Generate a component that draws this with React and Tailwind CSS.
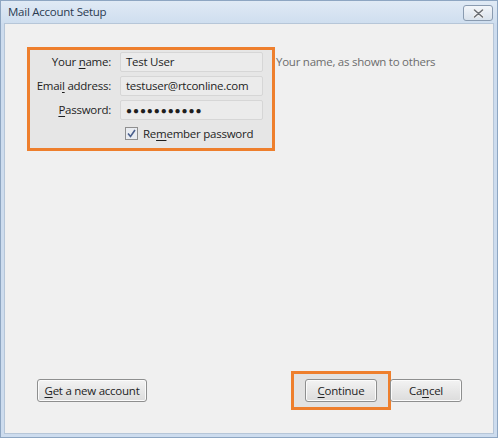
import React from "react";

const font = { fontFamily: '"Open Sans", "Noto Sans", sans-serif' };

function U({ children }) {
  return <span className="underline underline-offset-2 decoration-1">{children}</span>;
}

const txt = "text-[11.5px] tracking-[-0.25px] leading-none whitespace-nowrap";

function Field({ label, value, mono }) {
  return (
    <div className="flex items-center h-[20px]">
      <div className={"w-[81px] text-right text-[#1e1e1e] " + txt}>{label}</div>
      <div className={"ml-[9px] w-[143px] h-[20px] border border-[#d6d6d6] rounded-[2px] bg-[#ebebeb] flex items-center px-[5px] text-[#1e1e1e] " + txt}>
        {mono ? <span className="tracking-[0.9px] text-[10px]">{value}</span> : value}
      </div>
    </div>
  );
}

function Btn({ children, className = "" }) {
  return (
    <div
      className={
        "h-[23px] border border-[#8e8f8f] rounded-[3px] flex items-center justify-center text-[#1e1e1e] bg-gradient-to-b from-[#f3f3f3] to-[#dcdcdc] shadow-[inset_0_0_0_1px_#fbfbfb] " +
        txt +
        " " +
        className
      }
    >
      {children}
    </div>
  );
}

export default function App() {
  return (
    <div className="w-[498px] h-[438px] flex flex-col bg-[#cddcee] border border-[#8ea6c2]" style={font}>
      {/* title bar */}
      <div className="h-[22px] flex items-center justify-between bg-gradient-to-b from-[#e0eaf5] to-[#cfdeef] pl-[7px] pr-[4px]">
        <span className={"text-[#2a3a50] " + txt}>Mail Account Setup</span>
        <div className="w-[30px] h-[16px] mt-[2px] rounded-[3px] border border-[#8a9bb0] bg-gradient-to-b from-[#f3f6fa] to-[#d9e2ec] flex items-center justify-center">
          <svg width="11" height="9" viewBox="0 0 11 9">
            <path d="M1.5 1 L9.5 8 M9.5 1 L1.5 8" stroke="#f5f5f5" strokeWidth="3.4" strokeLinecap="round" />
            <path d="M1.5 1 L9.5 8 M9.5 1 L1.5 8" stroke="#6a6e74" strokeWidth="1.6" strokeLinecap="round" />
          </svg>
        </div>
      </div>
      {/* content */}
      <div className="flex-1 mx-[3px] mb-[3px] bg-[#f0f0f0] border border-[#b6c6d8] flex flex-col">
        <div className="flex items-start mt-[23px] ml-[22px]">
          <div className="w-[248px] h-[104px] border-[3px] border-[#ee7f2d] bg-[#e6e6e6] flex flex-col pt-[2px] gap-[4px]">
            <Field label={<>Your <U>n</U>ame:</>} value="Test User" />
            <Field label={<>Emai<U>l</U> address:</>} value="testuser@rtconline.com" />
            <Field label={<><U>P</U>assword:</>} value="●●●●●●●●●●●" mono />
            <div className="flex items-center mt-[3px] ml-[95px]">
              <div className="w-[13px] h-[13px] border border-[#8f8f8f] bg-[#e9ecf1] flex items-center justify-center">
                <svg width="9" height="9" viewBox="0 0 9 9">
                  <path d="M1 4.5 L3.5 7.5 L8 1" stroke="#4a5f8c" strokeWidth="1.6" fill="none" />
                </svg>
              </div>
              <span className={"ml-[5px] text-[#1e1e1e] " + txt}>
                Re<U>m</U>ember password
              </span>
            </div>
          </div>
          <span className={"ml-[1px] mt-[9px] text-[#6d6d6d] " + txt}>
            Your name, as shown to others
          </span>
        </div>
        <div className="flex-1" />
        <div className="flex items-center mb-[23px] ml-[32px] mr-[31px]">
          <Btn className="w-[110px]">
            <U>G</U>et a new account
          </Btn>
          <div className="flex-1" />
          <div className="w-[100px] h-[39px] border-[3px] border-[#ee7f2d] bg-[#e2e2e2] flex items-center pl-[11px]">
            <Btn className="w-[72px] from-[#e6e6e6] to-[#d0d0d0]">
              <U>C</U>ontinue
            </Btn>
          </div>
          <Btn className="w-[72px] -ml-[1px]">
            Ca<U>n</U>cel
          </Btn>
        </div>
      </div>
    </div>
  );
}
